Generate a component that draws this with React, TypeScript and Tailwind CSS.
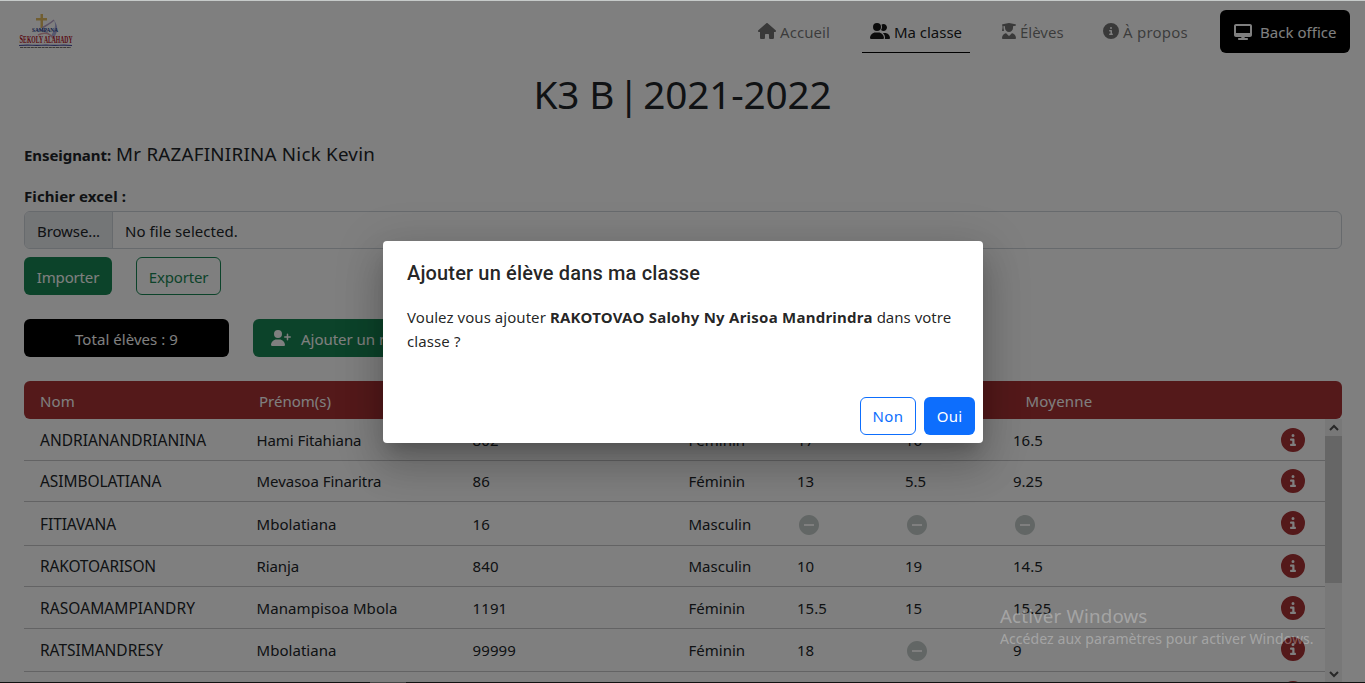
import type { ReactNode } from 'react';
import {
  FaCircleInfo,
  FaDesktop,
  FaHouse,
  FaUserGraduate,
  FaUserGroup,
  FaUserPlus,
} from 'react-icons/fa6';
import { MdRemoveCircle } from 'react-icons/md';

type Cell = { text: string; cls: string };
type Row = {
  height: string;
  nom: Cell;
  prenom: Cell;
  numero: string;
  sexe: string;
  notes: (string | null)[];
};

const rows: Row[] = [
  {
    height: 'h-[42px]',
    nom: { text: 'ANDRIANANDRIANINA', cls: '' },
    prenom: { text: 'Hami Fitahiana', cls: 'tracking-[-0.08px]' },
    numero: '802',
    sexe: 'Féminin',
    notes: ['17', '16', '16.5'],
  },
  {
    height: 'h-[41px]',
    nom: { text: 'ASIMBOLATIANA', cls: 'tracking-[-0.07px]' },
    prenom: { text: 'Mevasoa Finaritra', cls: 'tracking-[-0.03px]' },
    numero: '86',
    sexe: 'Féminin',
    notes: ['13', '5.5', '9.25'],
  },
  {
    height: 'h-[44px]',
    nom: { text: 'FITIAVANA', cls: 'tracking-[-0.08px]' },
    prenom: { text: 'Mbolatiana', cls: 'tracking-[0.04px]' },
    numero: '16',
    sexe: 'Masculin',
    notes: [null, null, null],
  },
  {
    height: 'h-[41px]',
    nom: { text: 'RAKOTOARISON', cls: 'tracking-[-0.15px]' },
    prenom: { text: 'Rianja', cls: 'tracking-[-0.11px]' },
    numero: '840',
    sexe: 'Masculin',
    notes: ['10', '19', '14.5'],
  },
  {
    height: 'h-[42px]',
    nom: { text: 'RASOAMAMPIANDRY', cls: 'tracking-[0.08px]' },
    prenom: { text: 'Manampisoa Mbola', cls: 'tracking-[0.09px]' },
    numero: '1191',
    sexe: 'Féminin',
    notes: ['15.5', '15', '15.25'],
  },
  {
    height: 'h-[43px]',
    nom: { text: 'RATSIMANDRESY', cls: 'tracking-[-0.03px]' },
    prenom: { text: 'Mbolatiana', cls: 'tracking-[0.04px]' },
    numero: '99999',
    sexe: 'Féminin',
    notes: ['18', null, '9'],
  },
];

function T({ children, cls = '' }: { children: ReactNode; cls?: string }) {
  return <span className={`block whitespace-nowrap ${cls}`}>{children}</span>;
}

function Logo() {
  return (
    <svg width="56" height="38" viewBox="0 0 56 38" className="block">
      <path d="M22.500 2h2.500v4h4v2.500h-4V16h-2.500V8.500H18V6h4.500z" fill="#e3bd62" />
      <path d="M17 18c6-2 12 0 16 6 2-4 6-9 3-16 4 6 5 11-1 19-5-6-11-9-18-9z" fill="#9a9cd6" opacity=".8" />
      <path d="M36 8c-3 3-7 5-12 8" stroke="#b9a6c9" strokeWidth="1.500" fill="none" />
      <path d="M20 23c6-3 12-2 16 4" stroke="#dfa3ab" strokeWidth="1.500" fill="none" />
      <text x="14" y="20" fontSize="5.500" fontWeight="700" fontFamily="Liberation Serif, serif" textLength="26" lengthAdjust="spacingAndGlyphs" fill="#26408c">
        SAMPANA
      </text>
      <text x="1.500" y="31" fontWeight="700" fontFamily="Liberation Serif, serif" textLength="53" lengthAdjust="spacingAndGlyphs" fill="#b3152a">
        <tspan fontSize="11.500">S</tspan>
        <tspan fontSize="10">EKOLY </tspan>
        <tspan fontSize="10">ALAHADY</tspan>
      </text>
      <path d="M1 33.500c12-1 14 .5 27-.5 12 1 15-.5 26 .5" stroke="#4f53a5" strokeWidth="1.200" fill="none" />
      <path d="M2 35.500h51" stroke="#77706e" strokeWidth="1" strokeDasharray="3 .6" />
    </svg>
  );
}

function Navbar() {
  return (
    <nav className="flex h-[60px] shrink-0 items-start justify-between pl-[18px] pr-[15px] text-[#0000008c]">
      <div className="pt-[11px]">
        <Logo />
      </div>
      <div className="flex items-start gap-6 pt-[9px]">
        <div className="mt-px flex h-[42px] w-[88px] items-center gap-1 border-b border-transparent px-2 pb-px">
          <FaHouse className="h-4 w-[18px] shrink-0" />
          <T cls="pt-0.5 tracking-[0.08px]">Accueil</T>
        </div>
        <div className="mt-px flex h-[42px] w-[108px] items-center gap-1 border-b border-black px-2 pb-px text-[#000000e6]">
          <FaUserGroup className="h-4 w-5 shrink-0" />
          <T cls="pt-0.5 tracking-[-0.03px]">Ma classe</T>
        </div>
        <div className="mt-px flex h-[42px] w-[77px] items-center gap-1 border-b border-transparent px-2 pb-px">
          <FaUserGraduate className="h-4 w-3.5 shrink-0" />
          <T cls="pt-0.5">Élèves</T>
        </div>
        <div className="mt-px flex h-[42px] w-[101px] items-center gap-1 border-b border-transparent px-2 pb-px">
          <FaCircleInfo className="size-4 shrink-0" />
          <T cls="pt-0.5 tracking-[0.23px]">À propos</T>
        </div>
        <div className="flex h-[43px] w-[130px] items-center gap-2 rounded-md bg-black pl-3.5 text-white">
          <FaDesktop className="h-4 w-[18px] shrink-0" />
          <T cls="tracking-[0.03px]">Back office</T>
        </div>
      </div>
    </nav>
  );
}

function StudentRow({ row }: { row: Row }) {
  const hasMissing = row.notes.includes(null);
  return (
    <div
      className={`grid shrink-0 grid-cols-[216.500px_216px_216px_108.500px_108px_108px_268px_1fr] items-center border-b border-[#c6c7c8] pl-4 ${row.height}`}
    >
      <T cls={`text-[15.5px] ${row.nom.cls}`}>{row.nom.text}</T>
      <T cls={row.prenom.cls}>{row.prenom.text}</T>
      <T cls="tracking-[0.12px]">{row.numero}</T>
      <T>{row.sexe}</T>
      {row.notes.map((note, i) =>
        note === null ? (
          <MdRemoveCircle key={i} size={24} className="mt-0.5 text-[#c4ccca]" />
        ) : (
          <T key={i}>{note}</T>
        ),
      )}
      <FaCircleInfo size={24} className={hasMissing ? 'mb-0.5 text-[#a93234]' : 'text-[#a93234]'} />
    </div>
  );
}

function Scrollbar() {
  return (
    <div className="flex w-[17px] shrink-0 flex-col bg-[#f0f0f0]">
      <div className="flex h-[17px] items-center justify-center">
        <svg width="10" height="8" viewBox="0 0 10 8">
          <path d="M1 6l4-4 4 4" stroke="#505050" strokeWidth="2" fill="none" />
        </svg>
      </div>
      <div className="h-[147px] bg-[#cdcdcd]" />
      <div className="flex-1" />
      <div className="flex h-[17px] items-center justify-center">
        <svg width="10" height="8" viewBox="0 0 10 8">
          <path d="M1 2l4 4 4-4" stroke="#505050" strokeWidth="2" fill="none" />
        </svg>
      </div>
    </div>
  );
}

function ConfirmDialog() {
  return (
    <div className="ml-px flex h-[202px] w-[600px] flex-col rounded bg-white text-[#212529] shadow-[0_11px_15px_-7px_rgba(0,0,0,0.2),0_24px_38px_3px_rgba(0,0,0,0.14),0_9px_46px_8px_rgba(0,0,0,0.12)]">
      <h2 className="px-6 pt-4 font-[Roboto,sans-serif] text-[20px] font-medium leading-8 tracking-[0.15px] text-[#000000de]">
        Ajouter un élève dans ma classe
      </h2>
      <div className="flex-1 px-6 pt-4 leading-6 text-[#000000de]">
        <div className="flex gap-1 whitespace-nowrap">
          <span className="tracking-[0.05px]">Voulez vous ajouter</span>
          <b className="tracking-[0.24px]">RAKOTOVAO Salohy Ny Arisoa Mandrindra</b>
          <span>dans votre</span>
        </div>
        <span className="tracking-[0.1px]">classe ?</span>
      </div>
      <div className="flex justify-end gap-2 p-2">
        <button className="flex h-[38px] w-14 items-center justify-center rounded-md border border-[#0d6efd] text-[#0d6efd]">
          <T cls="tracking-[0.42px]">Non</T>
        </button>
        <button className="flex h-[38px] w-[51px] items-center justify-center rounded-md bg-[#0d6efd] text-white">
          <T cls="tracking-[0.21px]">Oui</T>
        </button>
      </div>
    </div>
  );
}

export default function App() {
  return (
    <div className="relative flex h-[683px] w-[1365px] flex-col overflow-hidden bg-white font-['Noto_Sans',sans-serif] text-[15px] leading-6 text-[#212529]">
      <div className="h-px shrink-0" />
      <Navbar />
      <h1 className="mt-[9px] whitespace-nowrap text-center text-[38.750px] leading-[48px] tracking-[-0.16px]">
        K3 B<span className="[word-spacing:-6px]"> | 2021-2022</span>
      </h1>

      <main className="flex min-h-0 flex-1 flex-col pl-6 pr-[23px]">
        <div className="mt-[21px] flex h-[30px] items-baseline gap-[5px] whitespace-nowrap leading-[30px]">
          <b className="tracking-[-0.07px]">Enseignant:</b>
          <span className="text-[18.750px] tracking-[0.25px]">Mr RAZAFINIRINA Nick Kevin</span>
        </div>
        <label className="mt-[15px] h-6 font-bold">
          <T cls="tracking-[0.1px]">Fichier excel :</T>
        </label>
        <div className="mt-[3px] flex h-[38px] shrink-0 items-center overflow-hidden rounded-md border border-[#ced4da]">
          <div className="flex h-full w-[88px] items-center border-r border-[#ced4da] bg-[#e9ecef] pl-3">
            <T cls="pt-0.5 tracking-[-0.1px]">Browse...</T>
          </div>
          <div className="pl-3">
            <T cls="pt-0.5 tracking-[0.06px]">No file selected.</T>
          </div>
        </div>
        <div className="mt-2 flex h-[38px] shrink-0 gap-6">
          <button className="flex w-[88px] items-center justify-center rounded-md bg-[#198754] text-white">
            <T cls="pt-0.5 tracking-[-0.15px]">Importer</T>
          </button>
          <button className="flex w-[85px] items-center justify-center rounded-md border border-[#198754] text-[#198754]">
            <T cls="pt-0.5 tracking-[-0.17px]">Exporter</T>
          </button>
        </div>
        <div className="mt-6 flex h-[38px] shrink-0 gap-6 text-white">
          <div className="flex w-[205px] items-center justify-center rounded-md bg-black">
            <T cls="pt-0.5 tracking-[0.05px]">Total élèves : 9</T>
          </div>
          <button className="flex w-[240px] items-center gap-2.5 rounded-md bg-[#198754] pl-[18px]">
            <FaUserPlus className="h-4 w-5 shrink-0" />
            <T cls="pt-0.5 tracking-[-0.03px]">Ajouter un nouvel élève</T>
          </button>
        </div>

        <div className="mt-6 grid h-[38px] shrink-0 grid-cols-[219px_766.500px_1fr] items-center rounded-md bg-[#a93234] pl-4 text-white">
          <T cls="pt-0.5 tracking-[0.16px]">Nom</T>
          <T cls="pt-0.5">Prénom(s)</T>
          <T cls="pt-0.5 tracking-[0.21px]">Moyenne</T>
        </div>
        <div className="flex min-h-0 flex-1 overflow-hidden">
          <div className="flex flex-1 flex-col overflow-hidden">
            {rows.map((row) => (
              <StudentRow key={row.nom.text} row={row} />
            ))}
            <div className="flex h-[42px] shrink-0 justify-end pr-5 pt-[9px]">
              <FaCircleInfo size={24} className="text-[#a93234]" />
            </div>
          </div>
          <Scrollbar />
        </div>
      </main>
      <div className="h-px shrink-0" />

      <div className="absolute inset-0 flex items-center justify-center bg-black/50">
        <ConfirmDialog />
      </div>

      <div className="absolute left-[1000px] top-[602px] whitespace-nowrap text-white/30">
        <div className="text-[18.750px] leading-7 tracking-[0.14px]">Activer Windows</div>
        <div className="text-[14.060px] leading-[18px] tracking-[0.05px]">Accédez aux paramètres pour activer Windows.</div>
      </div>

      <div className="absolute inset-x-0 top-0 h-px bg-[#c6cac9]" />
      <div className="absolute inset-x-0 bottom-0 flex h-px bg-[#111111] pl-[370px]">
        <div className="w-9 bg-[#444444]" />
      </div>
    </div>
  );
}
